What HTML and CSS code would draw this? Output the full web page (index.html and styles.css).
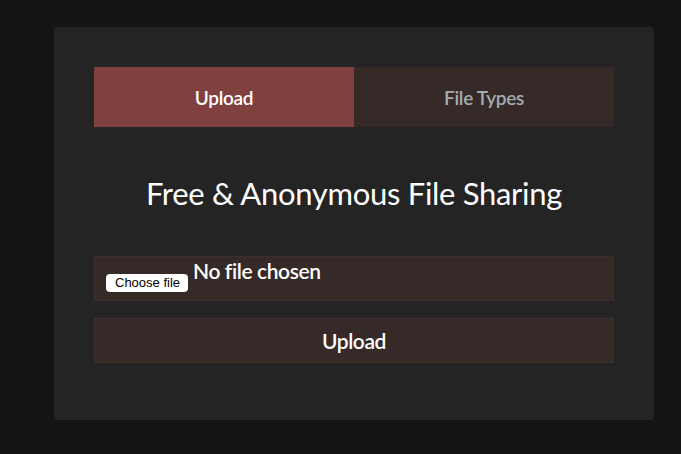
FILE: index.html
```html
<!DOCTYPE html>
<html>
<head>
<meta charset="utf-8">
<link rel="stylesheet" href="styles.css">
</head>
<body>
<div class="card">
  <div class="tabs">
    <div class="tab active">Upload</div>
    <div class="tab">File Types</div>
  </div>
  <h1 class="title">Free &amp; Anonymous File Sharing</h1>
  <div class="file-box">
    <span class="choose">Choose file</span>
    <span class="nofile">No file chosen</span>
  </div>
  <div class="upload-btn">Upload</div>
</div>
</body>
</html>
```
FILE: styles.css
```css
html, body {
  margin: 0;
  padding: 0;
  background: #141414;
  font-family: "Lato", "Open Sans", sans-serif;
  color: #ffffff;
}
body {
  height: 454px;
  overflow: hidden;
}
.card {
  margin: 27px 0 0 54px;
  width: 600px;
  height: 393px;
  box-sizing: border-box;
  background: #242424;
  border-radius: 4px;
  padding: 40px;
}
.tabs {
  display: flex;
  height: 60px;
}
.tab {
  flex: 1;
  display: flex;
  align-items: center;
  justify-content: center;
  background: #352a28;
  color: #a3acb0;
  font-size: 19px;
  font-weight: 600;
  letter-spacing: -0.3px;
}
.tab.active {
  background: #804040;
  color: #ffffff;
}
.title {
  margin: 46px 0 0 0;
  text-align: center;
  font-weight: 400;
  font-size: 31px;
  line-height: 40px;
  letter-spacing: -0.3px;
}
.file-box {
  margin-top: 43px;
  height: 45px;
  box-sizing: border-box;
  background: #352a28;
  border: 1px solid #3d2f2c;
  display: flex;
  align-items: flex-start;
  padding-left: 11px;
}
.choose {
  margin-top: 17px;
  background: #ffffff;
  color: #000000;
  font-family: "Liberation Sans", Arial, sans-serif;
  font-size: 13px;
  line-height: 18px;
  height: 18px;
  padding: 0 8px 0 9px;
  border-radius: 4px;
}
.nofile {
  margin-left: 5px;
  margin-top: 1px;
  font-size: 21px;
  font-weight: 600;
  line-height: 26px;
  letter-spacing: -0.4px;
}
.upload-btn {
  margin-top: 17px;
  height: 45px;
  box-sizing: border-box;
  background: #352a28;
  border: 1px solid #3d2f2c;
  display: flex;
  align-items: center;
  justify-content: center;
  font-size: 21px;
  font-weight: 600;
  letter-spacing: -0.4px;
}
```
